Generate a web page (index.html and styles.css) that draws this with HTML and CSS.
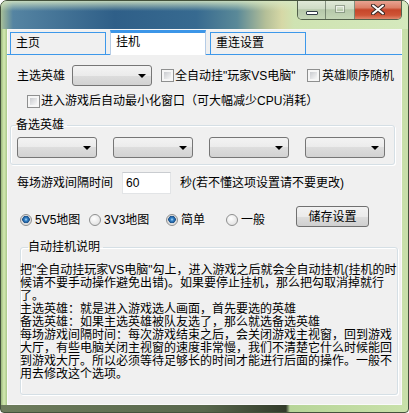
FILE: index.html
```html
<!DOCTYPE html>
<html lang="zh-CN">
<head>
  <meta charset="UTF-8">
  <title>挂机</title>
  <link rel="stylesheet" href="styles.css">
</head>
<body>
  <div class="window">
    <!-- barra de título com os botões -->
    <div class="titlebar">
      <div class="caption">
        <span class="cap-btn cap-min"><i></i></span>
        <span class="cap-btn cap-max"><i></i></span>
        <span class="cap-btn cap-close">
          <svg width="14" height="11" viewBox="0 0 14 11">
            <path d="M2 1.5 L12 9.5 M12 1.5 L2 9.5" stroke="#3b2a26" stroke-width="4" stroke-linecap="round"/>
            <path d="M2 1.5 L12 9.5 M12 1.5 L2 9.5" stroke="#ffffff" stroke-width="2" stroke-linecap="round"/>
          </svg>
        </span>
      </div>
    </div>

    <div class="client">
      <div class="tabs">
        <div class="tab">主页</div>
        <div class="tab active">挂机</div>
        <div class="tab">重连设置</div>
      </div>

      <div class="panel">
        <div class="row row-main">
          <span class="lbl lbl-main">主选英雄</span>
          <span class="combo"></span>
          <label class="check check-auto"><span class="box"></span>全自动挂"玩家VS电脑"</label>
          <label class="check check-rand"><span class="box"></span>英雄顺序随机</label>
        </div>

        <div class="row row-min">
          <label class="check check-min"><span class="box"></span>进入游戏后自动最小化窗口（可大幅减少CPU消耗）</label>
        </div>

        <fieldset class="group group-alt">
          <legend>备选英雄</legend>
          <div class="combos">
            <span class="combo"></span>
            <span class="combo"></span>
            <span class="combo"></span>
            <span class="combo"></span>
          </div>
        </fieldset>

        <div class="row row-interval">
          <span class="lbl lbl-interval">每场游戏间隔时间</span>
          <span class="textbox">60</span>
          <span class="hint">秒(若不懂这项设置请不要更改)</span>
        </div>

        <div class="row row-opts">
          <label class="opt opt-5v5"><span class="radio on"></span>5V5地图</label>
          <label class="opt opt-3v3"><span class="radio"></span>3V3地图</label>
          <label class="opt opt-easy"><span class="radio on"></span>简单</label>
          <label class="opt opt-normal"><span class="radio"></span>一般</label>
          <span class="button">储存设置</span>
        </div>

        <fieldset class="group group-help">
          <legend>自动挂机说明</legend>
          <p class="help">
            把"全自动挂玩家VS电脑"勾上，进入游戏之后就会全自动挂机(挂机的时<br>
            候请不要手动操作避免出错)。如果要停止挂机，那么把勾取消掉就行<br>
            了。<br>
            主选英雄：就是进入游戏选人画面，首先要选的英雄<br>
            备选英雄：如果主选英雄被队友选了，那么就选备选英雄<br>
            每场游戏间隔时间：每次游戏结束之后，会关闭游戏主视窗，回到游戏<br>
            大厅，有些电脑关闭主视窗的速度非常慢，我们不清楚它什么时候能回<br>
            到游戏大厅。所以必须等待足够长的时间才能进行后面的操作。一般不<br>
            用去修改这个选项。
          </p>
        </fieldset>
      </div>
    </div>
  </div>
</body>
</html>
```

FILE: styles.css
```css
/* Geral */
body {
  margin: 0;
  background: #ffffff;
  font-family: "Liberation Sans", "Noto Sans CJK SC", sans-serif;
  font-size: 12px;
  line-height: 14px;
  color: #000000;
}

.window {
  width: 409px;
  height: 413px;
  box-sizing: border-box;
  border: 1px solid #44523c;
  border-radius: 7px 7px 4px 4px;
  overflow: hidden;
  display: flex;
  flex-direction: column;
  background:
    linear-gradient(to right, #6d7c5c 0, #58674c 50%, #323b2a 70%, #b7d598 71%, #c9e1aa 100%) left bottom / 100% 7px no-repeat,
    linear-gradient(to right, #9cba7e 0, #d3eab0 3px, #a9c78a 6px, #bdd89d 8px, #c8e0aa 100%);
}

/* Barra de título */
.titlebar {
  height: 28px;
  display: flex;
  justify-content: flex-end;
  align-items: flex-start;
  padding-right: 6px;
  background:
    linear-gradient(to bottom, rgba(216, 232, 196, 0.85) 0, rgba(216, 232, 196, 0) 10px),
    linear-gradient(to right, #a7bf98 0, #5584a2 12px, #2f5f88 28%, #376a90 48%, #5a8998 58%, #b4bf98 65%, #d6d8a6 69%, #cfe3b2 72%, #d5e9bd 100%);
}

.caption {
  display: flex;
  height: 19px;
  margin-top: -1px;
  border: 1px solid rgba(40, 52, 40, 0.75);
  border-top: none;
  border-radius: 0 0 5px 5px;
  overflow: hidden;
}

.cap-btn {
  display: flex;
  justify-content: center;
  align-items: center;
  height: 19px;
}

.cap-min,
.cap-max {
  width: 27px;
  background: linear-gradient(#e2ebda, #cfdcc6 45%, #b6c8aa 52%, #c4d6b6 100%);
  border-right: 1px solid rgba(60, 72, 60, 0.55);
}

.cap-max {
  width: 28px;
}

.cap-min i {
  width: 10px;
  height: 2px;
  margin-top: 6px;
  background: #ffffff;
  border: 1px solid #2f3a44;
  border-radius: 1px;
}

.cap-max i {
  width: 8px;
  height: 6px;
  margin-top: -1px;
  border: 1px solid rgba(110, 124, 108, 0.6);
  box-shadow: inset 0 0 0 1px rgba(255, 255, 255, 0.6);
}

.cap-close {
  width: 46px;
  background: linear-gradient(#eaa898, #dc8068 40%, #c6462a 52%, #cf5436 80%, #e0876c 100%);
}

/* Área do cliente */
.client {
  margin: 0 6px;
  height: 376px;
  display: flex;
  flex-direction: column;
  background: #f0f0f0;
  box-shadow: inset 0 0 0 1px #fafafa;
}

.tabs {
  height: 26px;
  box-sizing: border-box;
  display: flex;
  align-items: flex-end;
  gap: 4px;
  padding-left: 3px;
  border-top: 1px solid #f8f8f8;
  border-bottom: 1px solid #3d98ea;
}

.tab {
  width: 96px;
  height: 22px;
  box-sizing: border-box;
  padding: 3px 0 0 5px;
  border: 1px solid #3d98ea;
  border-bottom: none;
  background: #f0f0f0;
}

.tab.active {
  height: 25px;
  margin-bottom: -1px;
  padding-top: 2px;
  background: #ffffff;
  border-top: 3px solid #3c96e8;
  border-left-color: #b5cce6;
  border-right-color: #b5cce6;
}

.panel {
  flex: 1;
  display: flex;
  flex-direction: column;
}

.row {
  display: flex;
  align-items: center;
}

.row-main {
  height: 21px;
  margin-top: 10px;
  padding-left: 10px;
}

.lbl-main {
  width: 55px;
}

.row-main .combo {
  margin-right: 9px;
}

.check {
  display: flex;
  align-items: center;
  gap: 1px;
}

.check-auto {
  width: 146px;
}

.check-rand {
  gap: 2px;
}

.row-min {
  height: 14px;
  margin-top: 8px;
  padding-left: 20px;
}

.box {
  width: 13px;
  height: 13px;
  box-sizing: border-box;
  padding: 2px;
  border: 1px solid #8e8f8f;
  background: linear-gradient(135deg, #c9cbcf, #f7f7f7) content-box, #f6f6f6;
}

/* Caixas de combinação */
.combo {
  width: 80px;
  height: 21px;
  box-sizing: border-box;
  display: flex;
  justify-content: flex-end;
  align-items: center;
  padding-right: 5px;
  border: 1px solid #767676;
  border-radius: 3px;
  background: linear-gradient(#f3f3f3 0%, #ebebeb 50%, #dddddd 50%, #d2d2d2 100%);
}

.combo::after {
  content: "";
  border-left: 4px solid transparent;
  border-right: 4px solid transparent;
  border-top: 4px solid #000000;
}

/* Grupos */
.group {
  margin: 0;
  padding: 0;
  border: 1px solid #d5dfe5;
  border-radius: 3px;
  box-shadow: inset 1px 1px 0 #ffffff, 1px 1px 0 #ffffff;
}

.group legend {
  padding: 0 3px 0 0;
  line-height: 14px;
}

.group-alt {
  margin: 10px 7px 0 3px;
  padding: 5px 0 6px 6px;
}

.group-alt legend {
  margin-left: -1px;
}

.combos {
  display: flex;
  gap: 16px;
}

.row-interval {
  height: 22px;
  margin-top: 7px;
  padding-left: 10px;
}

.lbl-interval {
  width: 105px;
}

.textbox {
  width: 49px;
  height: 22px;
  box-sizing: border-box;
  padding: 3px 0 0 3px;
  border: 1px solid #e2e4e6;
  border-top-color: #c9ccd0;
  background: #ffffff;
  margin-right: 9px;
}

.row-opts {
  height: 21px;
  margin-top: 12px;
  padding-left: 13px;
  align-items: flex-start;
}

.opt {
  display: flex;
  align-items: center;
  gap: 3px;
  margin-top: 7px;
}

.opt-5v5 { width: 69px; }
.opt-3v3 { width: 77px; }
.opt-easy { width: 60px; }
.opt-normal { width: 70px; }

.radio {
  width: 12px;
  height: 12px;
  box-sizing: border-box;
  border: 1px solid #8e8f8f;
  border-radius: 50%;
  background: radial-gradient(circle at 40% 35%, #ffffff, #dadada);
}

.radio.on {
  background: radial-gradient(circle at 50% 45%, #bfe0fa 0, #3484ca 1.5px, #1c5088 3.5px, #dadada 4px, #f2f2f2 100%);
}

.button {
  width: 73px;
  height: 21px;
  box-sizing: border-box;
  display: flex;
  justify-content: center;
  align-items: center;
  border: 1px solid #707070;
  border-radius: 3px;
  background: linear-gradient(#f2f2f2 0%, #ebebeb 50%, #dddddd 51%, #cfcfcf 100%);
}

.group-help {
  height: 155px;
  box-sizing: border-box;
  margin: 13px 4px 0 13px;
}

.group-help legend {
  margin-left: 7px;
}

.help {
  margin: 10px 0 0 -1px;
  line-height: 13px;
  white-space: nowrap;
}
```
